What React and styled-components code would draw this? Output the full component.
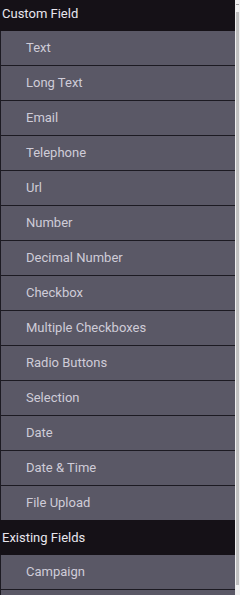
import React from 'react';
import styled, { createGlobalStyle } from 'styled-components';

const Global = createGlobalStyle`
  html, body {
    margin: 0;
    padding: 0;
    background: #ffffff;
    font-family: Roboto, "Liberation Sans", sans-serif;
  }
`;

const Frame = styled.div`
  width: 240px;
  height: 595px;
  display: flex;
  overflow: hidden;
`;

const Panel = styled.div`
  flex: 1;
  min-width: 0;
  overflow: hidden;
`;

const ScrollTrack = styled.div`
  width: 5px;
  background: #f1f1f1;
  display: flex;
  flex-direction: column;
  align-items: center;
  padding: 4px 0 10px;
  box-sizing: border-box;
`;

const Arrow = styled.div`
  width: 3px;
  height: 1px;
  background: #a3a3a3;
  margin-bottom: 7px;
`;

const Thumb = styled.div`
  flex: 1;
  width: 3px;
  background: #c1c1c1;
`;

const GroupTitle = styled.div`
  height: ${p => (p.first ? '31px' : '35px')};
  display: flex;
  align-items: center;
  padding-left: 2px;
  padding-bottom: ${p => (p.first ? '5px' : '0')};
  box-sizing: border-box;
  background: #151117;
  color: #e8e6ee;
  font-size: 13px;
`;

const Item = styled.div`
  height: 34px;
  display: flex;
  align-items: center;
  padding-left: 25px;
  padding-bottom: 1px;
  box-sizing: border-box;
  background: #5a5866;
  color: #cfccd8;
  font-size: 13px;
  border-left: 1px solid #1c1a22;
  cursor: pointer;

  & + & {
    height: 35px;
    border-top: 1px solid #1c1a22;
  }
`;

const Filler = styled.div`
  height: 40px;
  background: #5a5866;
  border-left: 1px solid #1c1a22;
  border-top: 1px solid #1c1a22;
`;

const groups = [
  {
    title: 'Custom Field',
    items: [
      'Text',
      'Long Text',
      'Email',
      'Telephone',
      'Url',
      'Number',
      'Decimal Number',
      'Checkbox',
      'Multiple Checkboxes',
      'Radio Buttons',
      'Selection',
      'Date',
      'Date & Time',
      'File Upload',
    ],
  },
  {
    title: 'Existing Fields',
    items: ['Campaign'],
  },
];

export default function App() {
  return (
    <>
      <Global />
      <Frame>
        <Panel>
          {groups.map((g, gi) => (
            <div key={g.title}>
              <GroupTitle first={gi === 0}>{g.title}</GroupTitle>
              {g.items.map(it => (
                <Item key={it}>{it}</Item>
              ))}
            </div>
          ))}
          <Filler />
        </Panel>
        <ScrollTrack>
          <Arrow />
          <Thumb />
        </ScrollTrack>
      </Frame>
    </>
  );
}
